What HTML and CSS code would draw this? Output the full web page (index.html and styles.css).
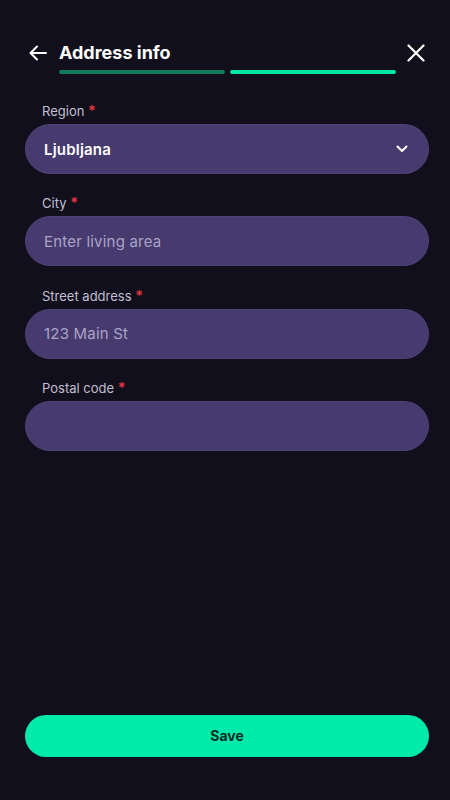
FILE: index.html
```html
<!DOCTYPE html>
<html lang="en">
<head>
<meta charset="utf-8">
<title>Address info</title>
<link rel="stylesheet" href="styles.css">
</head>
<body>
<div class="screen">
  <header class="header">
    <button class="icon-btn back" aria-label="Back">
      <svg width="18" height="16" viewBox="0 0 18 16" fill="none" stroke="#fff" stroke-width="2" stroke-linecap="round" stroke-linejoin="round"><path d="M17 8H1.5M8 1.5L1.5 8L8 14.5"/></svg>
    </button>
    <div class="title-wrap">
      <h1 class="title">Address info</h1>
      <div class="progress">
        <span class="step done"></span>
        <span class="step active"></span>
      </div>
    </div>
    <button class="icon-btn close" aria-label="Close">
      <svg width="18" height="18" viewBox="0 0 18 18" fill="none" stroke="#fff" stroke-width="2.2" stroke-linecap="round"><path d="M1.5 1.5L16.5 16.5M16.5 1.5L1.5 16.5"/></svg>
    </button>
  </header>

  <form class="form">
    <div class="field">
      <label class="label">Region <span class="req">*</span></label>
      <div class="input select">
        <span class="value">Ljubljana</span>
        <svg class="chevron" width="12" height="8" viewBox="0 0 12 8" fill="none" stroke="#fff" stroke-width="2" stroke-linecap="round" stroke-linejoin="round"><path d="M1.5 1.5L6 6L10.5 1.5"/></svg>
      </div>
    </div>
    <div class="field">
      <label class="label">City <span class="req">*</span></label>
      <div class="input"><span class="placeholder">Enter living area</span></div>
    </div>
    <div class="field">
      <label class="label">Street address <span class="req">*</span></label>
      <div class="input"><span class="placeholder">123 Main St</span></div>
    </div>
    <div class="field">
      <label class="label">Postal code <span class="req">*</span></label>
      <div class="input"></div>
    </div>
  </form>

  <footer class="footer">
    <button class="save" type="button">Save</button>
  </footer>
</div>
</body>
</html>
```

FILE: styles.css
```css
* { box-sizing: border-box; }
html, body { margin: 0; padding: 0; }
body {
  background: #110f1b;
  font-family: Inter, "Noto Sans", sans-serif;
  color: #fff;
}
.screen {
  min-height: 800px;
  display: flex;
  flex-direction: column;
  padding: 0 21px 43px 25px;
}
.header {
  display: flex;
  align-items: flex-start;
  padding-top: 40px;
}
.icon-btn {
  background: none;
  border: 0;
  padding: 0;
  display: flex;
  align-items: center;
  justify-content: center;
  cursor: pointer;
}
.back {
  width: 34px;
  height: 26px;
  justify-content: flex-start;
  padding-left: 4px;
}
.title-wrap {
  flex: 1;
  display: flex;
  flex-direction: column;
}
.title {
  margin: 0;
  font-size: 18px;
  font-weight: 700;
  line-height: 26px;
  letter-spacing: 0;
}
.progress {
  display: flex;
  gap: 5px;
  margin-top: 4px;
  width: 337px;
}
.step {
  flex: 1;
  height: 4px;
  border-radius: 2px;
}
.step.done { background: #137a5d; }
.step.active { background: #02e6a6; }
.close {
  width: 33px;
  height: 26px;
  justify-content: flex-end;
  padding-right: 4px;
}
.form {
  display: flex;
  flex-direction: column;
  gap: 19.4px;
  margin-top: 27px;
}
.field {
  display: flex;
  flex-direction: column;
  gap: 3px;
}
.label {
  padding-left: 17px;
  font-size: 13px;
  line-height: 20px;
  color: #c3bfd3;
}
.req {
  color: #e2343f;
  font-weight: 700;
  font-size: 14px;
}
.input {
  height: 50px;
  border-radius: 25px;
  background: #463a6f;
  border: 1px solid #4d4178;
  display: flex;
  align-items: center;
  padding: 0 18px;
  font-size: 15px;
  letter-spacing: 0.2px;
}
.value {
  font-weight: 600;
  color: #fff;
}
.placeholder { color: #aaa4c6; }
.select { justify-content: space-between; }
.chevron { margin-right: 2px; }
.footer {
  margin-top: auto;
}
.save {
  width: 100%;
  height: 42px;
  border: 0;
  border-radius: 21px;
  background: #00eaaa;
  color: #0f2a22;
  font-family: Inter, "Noto Sans", sans-serif;
  font-size: 14px;
  font-weight: 700;
  cursor: pointer;
  padding-bottom: 2px;
}
```
